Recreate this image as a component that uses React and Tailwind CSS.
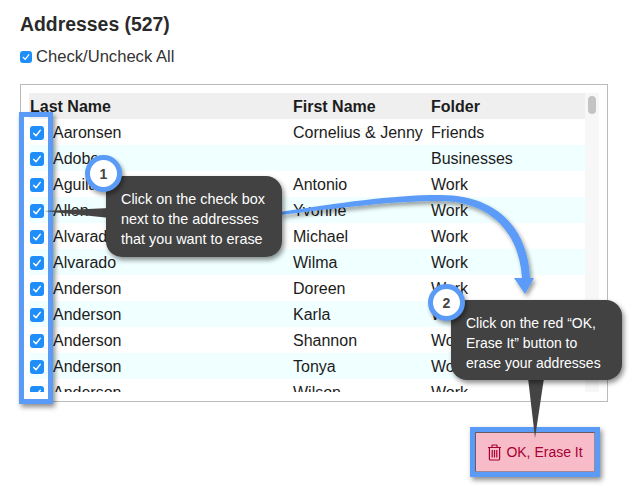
import React from 'react';

const rows = [
  ['Aaronsen', 'Cornelius & Jenny', 'Friends'],
  ['Adobe', '', 'Businesses'],
  ['Aguilar', 'Antonio', 'Work'],
  ['Allen', 'Yvonne', 'Work'],
  ['Alvarado', 'Michael', 'Work'],
  ['Alvarado', 'Wilma', 'Work'],
  ['Anderson', 'Doreen', 'Work'],
  ['Anderson', 'Karla', 'Work'],
  ['Anderson', 'Shannon', 'Work'],
  ['Anderson', 'Tonya', 'Work'],
  ['Anderson', 'Wilson', 'Work'],
];

const CheckBox = ({ small }) => (
  <div className={`flex shrink-0 items-center justify-center bg-[#1f8efa] ${small ? 'h-3 w-3 rounded-[3px]' : 'h-[14px] w-[14px] rounded-[3px]'}`}>
    <svg viewBox="0 0 14 14" className="h-full w-full" fill="none" stroke="#fff" strokeWidth="1.5" strokeLinecap="round" strokeLinejoin="round">
      <path d="M3.8 7.4 6 9.8 10.2 4.4" />
    </svg>
  </div>
);

const Badge = ({ n, className }) => (
  <div className={`absolute flex h-[37px] w-[37px] items-center justify-center rounded-full border-[5px] border-[#5b9bf8] bg-white text-sm font-bold text-[#444] shadow-[2px_3px_4px_rgba(0,0,0,0.4)] ${className}`}>
    {n}
  </div>
);

export default function App() {
  return (
    <div className="relative h-[491px] w-[631px] overflow-hidden bg-white font-['Liberation_Sans',Arial,sans-serif] text-[#1c1c1c]">
      <div className="px-5 pt-3">
        <h1 className="text-[19.4px] leading-[24px] font-bold text-[#2a2a2a]">Addresses (527)</h1>
        <div className="mt-[11px] flex h-5 items-center gap-1">
          <CheckBox small />
          <span className="text-[16.6px] leading-5 text-[#333]">Check/Uncheck All</span>
        </div>

        <div className="mt-[17px] h-[318px] w-[588px] border border-[#bbb] p-2">
          <div className="flex h-[299px] overflow-hidden">
            <div className="w-[556px] shrink-0">
              <div className="flex h-[26px] items-center bg-[#efefef] pt-px pl-px text-base font-bold">
                <div className="w-[263px]">Last Name</div>
                <div className="w-[138px]">First Name</div>
                <div>Folder</div>
              </div>
              {rows.map((r, i) => (
                <div key={i} className={`flex h-[26px] shrink-0 items-center pt-px pl-px text-base ${i % 2 ? 'bg-[#f0ffff]' : 'bg-white'}`}>
                  <div className="flex w-[263px] items-center gap-[9px]">
                    <CheckBox />
                    <span>{r[0]}</span>
                  </div>
                  <div className="w-[138px]">{r[1]}</div>
                  <div>{r[2]}</div>
                </div>
              ))}
            </div>
            <div className="w-[14px] bg-[#f7f7f7] pt-[3px] pl-[3px]">
              <div className="h-[18px] w-2 rounded bg-[#c4c4c4]" />
            </div>
          </div>
        </div>

        <div className="mt-[25px] flex justify-end pr-[11px]">
          <div className="border-[5px] border-[#5b9bf8] shadow-[2px_3px_5px_rgba(0,0,0,0.45)]">
            <button className="flex h-10 w-[120px] items-center justify-center gap-1 border border-t-[#6b5a60] border-r-[#a08890] border-b-[#a08890] border-l-[#6b5a60] bg-[#f8bbc8] text-sm text-[#a80032]">
              <svg width="15" height="17" viewBox="0 0 15 17" fill="none" stroke="#a80032" strokeWidth="1.2">
                <path d="M1 3.5h13M5 3.5V1.6c0-.4.3-.6.6-.6h3.8c.3 0 .6.2.6.6v1.9M2.4 3.5V15c0 .6.4 1 1 1h8.2c.6 0 1-.4 1-1V3.5M5.2 6v7.5M7.5 6v7.5M9.8 6v7.5" />
              </svg>
              OK, Erase It
            </button>
          </div>
        </div>
      </div>

      {/* highlight around the check boxes */}
      <div className="absolute top-[112px] left-[19px] h-[292px] w-[34px] border-[5px] border-[#5b9bf8] shadow-[2px_3px_5px_rgba(0,0,0,0.45)]" />

      {/* arrow + pointers */}
      <svg className="absolute top-0 left-0" width="631" height="491" viewBox="0 0 631 491">
        <defs>
          <filter id="sh" x="-10%" y="-10%" width="120%" height="120%">
            <feDropShadow dx="2" dy="3" stdDeviation="2" floodColor="#000" floodOpacity="0.4" />
          </filter>
        </defs>
        <path
          filter="url(#sh)"
          fill="#5b9bf8"
          d="M280 212 C340 203 390 195 440 195 C497 195 528 228 530 278 L534 278 L525 294 L514 278 L522 278 C519 232 490 201 440 201 C390 201 340 208 280 215 Z"
        />
        <path fill="#444" d="M44 211 L110 208 L110 218 Z" />
        <path fill="#444" d="M528 378 L544 378 L535 438 Z" />
      </svg>

      <div className="absolute top-[176px] left-[106px] h-[81px] w-[176px] rounded-2xl bg-[#424242] py-[13px] pl-[15px] text-[14.4px] leading-5 text-white shadow-[2px_3px_5px_rgba(0,0,0,0.45)]">
        Click on the check box<br />next to the addresses<br />that you want to erase
      </div>
      <Badge n="1" className="top-[155px] left-[85px]" />

      <div className="absolute top-[300px] left-[451px] h-[80px] w-[171px] rounded-2xl bg-[#424242] py-[13px] pl-[15px] text-sm leading-5 text-white shadow-[2px_3px_5px_rgba(0,0,0,0.45)]">
        Click on the red “OK,<br />Erase It” button to<br />erase your addresses
      </div>
      <Badge n="2" className="top-[284px] left-[428px]" />
    </div>
  );
}
